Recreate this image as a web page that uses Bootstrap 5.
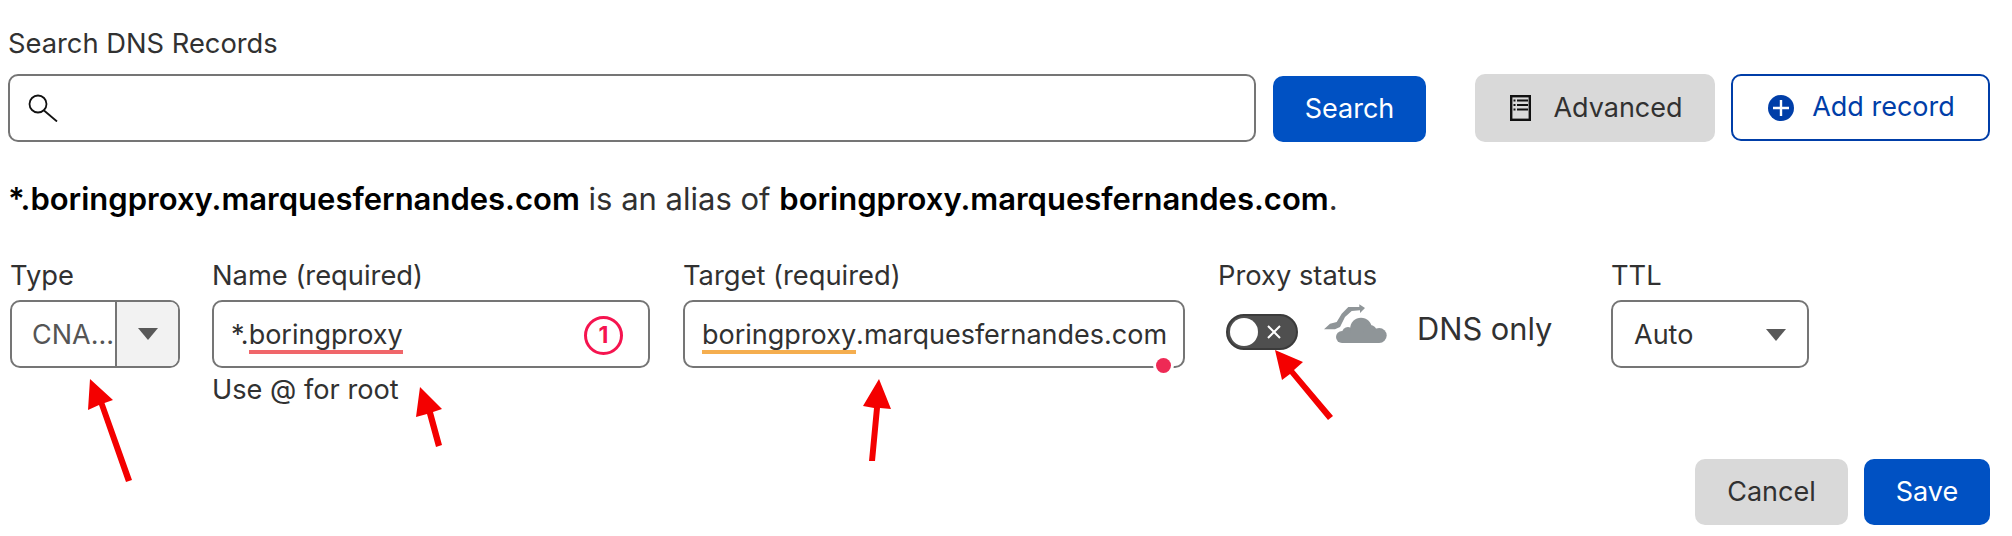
<!DOCTYPE html>
<html lang="en">
<head>
    <meta charset="UTF-8">
    <title>DNS Records</title>
    <link rel="stylesheet" href="https://cdn.jsdelivr.net/npm/bootstrap@5.3.0/dist/css/bootstrap.min.css">
    <style>
        body { font-family: "Inter", "Liberation Sans", sans-serif; font-size: 27px; color: #313131; background: #fff; }
        .page-wrap { width: 2012px; height: 536px; padding: 25px 22px 0 8px; position: relative; overflow: hidden; }
        .field-label { font-size: 27.3px; line-height: 38px; margin: 0 0 5px; color: #313131; }
        .search-row { margin-top: 11px; }
        .search-box { width: 1248px; height: 67px; padding-left: 19px; }
        .dns-input { height: 68px; border: 2px solid #757575; border-radius: 10px; font-size: 27px; color: #313131; padding: 0 17px; background: #fff; display: flex; align-items: center; }
        .field-input { padding-top: 2px; }
        .btn-cf { height: 67px; border-radius: 10px; font-size: 27px; display: flex; align-items: center; justify-content: center; padding: 0; border: 0; }
        .btn-blue { background: #0051c3; color: #fff; }
        .btn-grey { background: #d9d9d9; color: #313131; }
        .btn-line { background: #fff; color: #003ea8; border: 2px solid #003ea8; }
        .btn-search { width: 153px; height: 66px; margin: 2px 0 0 17px; }
        .btn-advanced { width: 240px; height: 68px; padding-left: 3px; }
        .btn-add { width: 259px; margin-left: 16px; padding-left: 2px; }
        .btn-cancel { width: 153px; height: 66px; }
        .btn-save { width: 126px; height: 66px; }
        .alias-line { font-size: 31px; line-height: 40px; margin: 37px 0 38px; color: #313131; }
        .alias-line strong { color: #000; font-weight: 600; }
        .form-line { margin-left: 2px; }
        .col-type { width: 170px; margin-right: 32px; }
        .col-name { width: 438px; margin-right: 33px; }
        .col-target { width: 502px; margin-right: 33px; }
        .col-proxy { width: 393px; }
        .col-ttl { width: 198px; }
        .type-text { flex: 1; padding: 2px 0 0 20px; color: #555; white-space: nowrap; }
        .type-caret { width: 63px; align-self: stretch; background: #f2f2f2; border-left: 2px solid #757575; border-radius: 0 8px 8px 0; display: flex; align-items: center; justify-content: center; }
        .caret-down { width: 0; height: 0; border-left: 10px solid transparent; border-right: 10px solid transparent; border-top: 12px solid #595959; }
        .under-red { border-bottom: 4px solid #f0666a; line-height: 30px; margin-top: 4px; }
        .under-orange { border-bottom: 4px solid #f5ae4f; line-height: 30px; margin-top: 4px; }
        .num-circle { width: 39px; height: 39px; border: 3px solid #f5144f; border-radius: 50%; color: #f5144f; font-size: 23px; font-weight: 700; display: flex; align-items: center; justify-content: center; line-height: 1; }
        .hint-text { font-size: 27.2px; line-height: 36px; margin-top: 4px; }
        .red-dot { position: absolute; width: 15px; height: 15px; border-radius: 50%; background: #ee2a55; right: 12px; bottom: -7px; box-shadow: 0 0 0 3px #fff; }
        .proxy-line { padding-left: 8px; height: 68px; }
        .toggle-pill { width: 72px; height: 36px; border-radius: 18px; background: #4f4f4f; border: 2px solid #3b3b3b; padding: 2px; display: flex; align-items: center; margin-bottom: 4px; }
        .toggle-knob { width: 28px; height: 28px; border-radius: 50%; background: #fff; }
        .cloud-icon { margin: 0 30px 21px 26px; }
        .dns-only { font-size: 30.8px; margin-bottom: 10px; }
        .ttl-input { padding: 2px 21px 0; }
        .icon-doc { margin-right: 22px; }
        .icon-plus { margin-right: 18px; }
        .btn-foot { margin-top: 51px; }
        .arrow-layer { position: absolute; left: 0; top: 0; pointer-events: none; }
    </style>
</head>
<body class="m-0">
    <div class="page-wrap">
        <div class="field-label">Search DNS Records</div>
        <div class="d-flex align-items-start search-row">
            <div class="dns-input search-box">
                <svg width="32" height="28" viewBox="0 0 32 28" fill="none" stroke="#111" stroke-width="1.8"><circle cx="11" cy="10" r="8.500"/><path d="M17 16.500l13 11"/></svg>
            </div>
            <button class="btn btn-cf btn-blue btn-search">Search</button>
            <button class="btn btn-cf btn-grey btn-advanced ms-auto">
                <svg width="21" height="26" viewBox="0 0 21 26" class="icon-doc" fill="none" stroke="#111"><rect x="1.200" y="1.200" width="18.600" height="23.600" stroke-width="2.400"/><path d="M7 5.500h11M7 10h11M7 14.500h11M3.500 5.500h2M3.500 10h2M3.500 14.500h2" stroke-width="2"/></svg>
                Advanced
            </button>
            <button class="btn btn-cf btn-line btn-add">
                <svg width="26" height="26" viewBox="0 0 26 26" class="icon-plus"><circle cx="13" cy="13" r="13" fill="#003ea8"/><path d="M13 5v16M5 13h16" stroke="#fff" stroke-width="2.400"/></svg>
                Add record
            </button>
        </div>
        <p class="alias-line"><strong>*.boringproxy.marquesfernandes.com</strong> is an alias of <strong>boringproxy.marquesfernandes.com</strong>.</p>
        <div class="d-flex form-line align-items-start">
            <div class="col-type">
                <div class="field-label">Type</div>
                <div class="dns-input p-0">
                    <span class="type-text">CNA...</span>
                    <span class="type-caret"><span class="caret-down"></span></span>
                </div>
            </div>
            <div class="col-name">
                <div class="field-label">Name (required)</div>
                <div class="dns-input field-input">
                    <span>*.</span><span class="under-red">boringproxy</span>
                    <span class="num-circle ms-auto me-2">1</span>
                </div>
                <div class="hint-text">Use @ for root</div>
            </div>
            <div class="col-target">
                <div class="field-label">Target (required)</div>
                <div class="dns-input field-input position-relative">
                    <span class="under-orange">boringproxy</span><span>.marquesfernandes.com</span>
                    <span class="red-dot"></span>
                </div>
            </div>
            <div class="col-proxy">
                <div class="field-label">Proxy status</div>
                <div class="d-flex align-items-center proxy-line">
                    <div class="toggle-pill">
                        <span class="toggle-knob"></span>
                        <svg width="16" height="16" viewBox="0 0 16 16" class="ms-2" stroke="#fff" stroke-width="2"><path d="M2 2l12 12M14 2L2 14"/></svg>
                    </div>
                    <svg width="63" height="40" viewBox="0 -1 63 40" class="cloud-icon" fill="#8f9598">
                        <path d="M0 24.300L6 18.700 12.700 17 17.700 8.700 24.300 2H35.300V-.7L41 3 36 8V5.300L27.700 6 21 12 16 22 11 24.300z"/>
                        <circle cx="18" cy="32" r="6"/>
                        <circle cx="24" cy="28" r="6"/>
                        <circle cx="37" cy="23.500" r="10.800"/>
                        <circle cx="46" cy="27" r="7"/>
                        <circle cx="55.200" cy="30.500" r="7.500"/>
                        <rect x="18" y="28" width="37" height="10"/>
                    </svg>
                    <span class="dns-only">DNS only</span>
                </div>
            </div>
            <div class="col-ttl">
                <div class="field-label">TTL</div>
                <div class="dns-input ttl-input justify-content-between">
                    <span>Auto</span>
                    <span class="caret-down"></span>
                </div>
            </div>
        </div>
        <div class="d-flex justify-content-end gap-3 btn-foot">
            <button class="btn btn-cf btn-grey btn-cancel">Cancel</button>
            <button class="btn btn-cf btn-blue btn-save">Save</button>
        </div>
        <svg class="arrow-layer" width="2012" height="536" fill="#f40000">
            <path d="M90 379L113 400 104.500 403 132 480 126 482 99 405 88 410z"/>
            <path d="M420 387L442 409 433 412 442 445 436 447 427 414 416 417z"/>
            <path d="M879 379L891 409 880 408 875 461 869 461 874 408 863 406z"/>
            <path d="M1275 350L1303 362 1294 370 1333 416 1328 420 1290 374 1282 380z"/>
        </svg>
    </div>
    <script src="https://cdn.jsdelivr.net/npm/bootstrap@5.3.0/dist/js/bootstrap.bundle.min.js"></script>
</body>
</html>
